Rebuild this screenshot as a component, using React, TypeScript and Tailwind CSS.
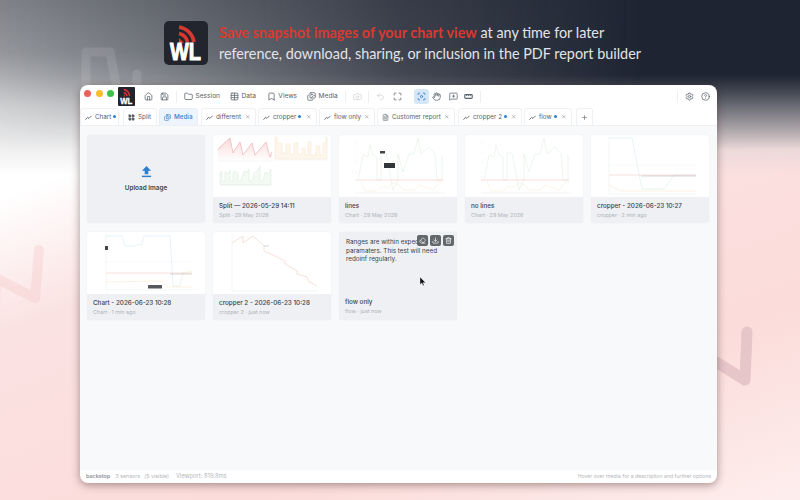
import React from 'react';
import {
  Folder, Table, Bookmark, Images, Home, Save, Undo2, Maximize, Hand, MessageSquarePlus,
  Settings, CircleHelp, LayoutGrid, X, Plus, FileText, Eraser, Download, Trash2, Camera, Focus,
} from 'lucide-react';

const FONT = 'font-["Inter","Liberation_Sans",sans-serif]';

function Logo({ size }: { size: 'lg' | 'sm' }) {
  const box = size === 'lg' ? 'w-[44px] h-[44px] rounded-[5px]' : 'w-[17px] h-[19px] rounded-[1px]';
  return (
    <div className={`${box} bg-[#22252d] shrink-0`}>
      <svg viewBox="0 0 44 44" className="w-full h-full" preserveAspectRatio="none">
        <path d="M15 6 A 18 18 0 0 1 30 21" fill="none" stroke="#d8382e" strokeWidth="3.6" />
        <path d="M15 12.5 A 11 11 0 0 1 23.5 21" fill="none" stroke="#d8382e" strokeWidth="3.6" />
        <path d="M15 17 L20 22 H15 Z" fill="#d8382e" />
        <text x="6" y="39" fontSize="23" fontWeight="700" fontFamily="Liberation Sans" fill="#fff" stroke="#fff" strokeWidth="1" textLength="31" lengthAdjust="spacingAndGlyphs">
          WL
        </text>
      </svg>
    </div>
  );
}

type ToolBtnProps = { icon: React.ElementType; label?: string; dim?: boolean; ml: string };

function ToolBtn({ icon: Icon, label, dim, ml }: ToolBtnProps) {
  return (
    <div className={`flex items-center gap-[2.5px] ${ml} ${dim ? 'text-[#d0d3d6]' : 'text-[#5a6068]'}`}>
      <Icon className="w-[9px] h-[9px]" strokeWidth={2} />
      {label && <span className="text-[6.6px] pt-[1px] whitespace-nowrap">{label}</span>}
    </div>
  );
}

function Sep({ ml }: { ml: string }) {
  return <div className={`w-px h-[12px] bg-[#eceef0] ${ml}`} />;
}

function RulerIcon({ className }: { className?: string }) {
  return (
    <svg viewBox="0 0 12 12" className={className} fill="none" stroke="currentColor" strokeWidth="1.4">
      <rect x="1" y="3.5" width="10" height="5" rx="1.2" />
      <path d="M3.5 3.5 V5.5 M6 3.5 V5.5 M8.5 3.5 V5.5" strokeWidth="1" />
    </svg>
  );
}

function LineIcon({ className }: { className?: string }) {
  return (
    <svg viewBox="0 0 8 8" className={className} fill="none" stroke="currentColor" strokeWidth="1">
      <path d="M0.5 6.5 L3 3.8 L4.5 5 L7.5 2" />
    </svg>
  );
}

function GridIcon({ className }: { className?: string }) {
  return <LayoutGrid className={className} fill="currentColor" strokeWidth={2} />;
}

type TabProps = {
  icon: React.ElementType;
  label: string;
  dot?: boolean;
  close?: boolean;
  active?: boolean;
  w: string;
};

function Tab({ icon: Icon, label, dot, close, active, w }: TabProps) {
  return (
    <div
      className={`${w} h-[17px] shrink-0 flex items-center gap-[3px] pl-[4px] pr-[5px] rounded-t-[3px] border border-b-0 text-[6.3px] ${
        active ? 'bg-[#eef4fb] border-[#e7edf3] text-[#2f7fd0] font-medium' : 'bg-white border-[#f0f1f3] text-[#5a6068]'
      }`}
    >
      <Icon className="w-[7px] h-[7px] shrink-0" />
      {label && <span className="pt-[1px] whitespace-nowrap">{label}</span>}
      {dot && <span className="w-[3px] h-[3px] -ml-[1px] -mt-[2px] rounded-full bg-[#2f7fd0] shrink-0" />}
      {close && <X className="w-[5.5px] h-[5.5px] ml-auto text-[#777] shrink-0" strokeWidth={2} />}
    </div>
  );
}

function Card({ title, sub, children }: { title: string; sub: string; children: React.ReactNode }) {
  return (
    <div className="h-[88px] rounded-[3px] overflow-hidden bg-[#eef0f3] flex flex-col shadow-[0_0_2px_rgba(0,0,0,0.05)]">
      <div className="h-[62px] bg-white shrink-0">{children}</div>
      <div className="px-[6px] pt-[4.5px]">
        <div className="text-[6.3px] leading-[9px] font-medium text-[#3d4248] whitespace-nowrap">{title}</div>
        <div className="text-[5.4px] leading-[9px] text-[#b0b4b9] whitespace-nowrap">{sub}</div>
      </div>
    </div>
  );
}

function Chart({ children }: { children: React.ReactNode }) {
  return (
    <svg viewBox="0 0 118 62" className="w-full h-full" fill="none" strokeWidth="0.45">
      {children}
    </svg>
  );
}

function SplitChart() {
  const red = 'M5 15 L7 12 L17 3 L20 18 L27 7 L30 20 L39 8 L42 20 L53 7 L57 22 L59 17';
  return (
    <Chart>
      <defs>
        <linearGradient id="redfade" x1="0" y1="0" x2="0" y2="1">
          <stop offset="0" stopColor="#fbdada" />
          <stop offset="1" stopColor="#fff" />
        </linearGradient>
      </defs>
      <path d={`${red} V26 H5 Z`} fill="url(#redfade)" />
      <path d={red} stroke="#eea5a5" strokeWidth="0.6" />
      <path d="M62 2 H64 V8 H69 V18 H73 V9 H77 V19 H81 V8 H85 V19 H89 V13 H92 V20 H95 V7 H98 V20 H103 V11 H107 V20 H110 V8 H113 V2 H114 V24 H62 Z" fill="#fdf6ec" stroke="#f9e4c8" />
      <path d="M7 38 L9 36 V46 H12 V36 L15 39 L17 35 V46 H20 V37 L23 36 L25 39 V46 H28 L31 36 L34 37 L36 34 V46 H39 L41 38 L44 36 L47 31 V46 H50 L52 37 L55 39 L58 34 V50 H7 Z" fill="#f3f9f3" stroke="#d6ead6" />
      <path d="M5 26 H60 M62 25 H115 M7 50 H58" stroke="#eceef0" />
    </Chart>
  );
}

function LinesChart({ marks }: { marks?: boolean }) {
  return (
    <Chart>
      <path d="M19 45 L24 20 L29 22 L31 10 L34 20 L38 22 V45 H42 V18 H47 L54 55 L59 45 V19 L64 37 L70 19 H75 L79 3 L82 19 L90 12 L96 19 L98 45 H103 V20" stroke="#d6ead6" />
      <path d="M16 45 H104" stroke="#f4b9b0" />
      <path d="M22 46 L26 56 H38 L42 52 H50 L54 48 L60 50 L64 55 H76 L80 50 L94 55 L100 47 H104" stroke="#f8e6cb" />
      <path d="M16 7 H18 M16 17 H18 M16 27 H18 M16 37 H18 M16 58 H106" stroke="#e5e7ea" />
      {marks && <rect x="41" y="16" width="5" height="2.5" fill="#444" />}
      {marks && <rect x="45" y="28" width="11" height="5" fill="#33363a" />}
    </Chart>
  );
}

function CropperChart() {
  return (
    <Chart>
      <path d="M18 3 H41 L51 54 H73 L83 40 H105" stroke="#c6e6ee" />
      <path d="M18 40 H105" stroke="#f4bdb4" />
      <path d="M50 41 H105" stroke="#8f8f88" strokeWidth="0.35" />
      <path d="M18 50 L30 56 H105" stroke="#f8dfbc" />
      <path d="M18 30 H105" stroke="#edf3f4" />
      <path d="M18 2 V59 H106" stroke="#e6e8eb" />
    </Chart>
  );
}

function ChartCard() {
  return (
    <Chart>
      <path d="M19 4 H35 L38 14 H46 L55 12 L57 4 H83 L86 54 H93 L96 40" stroke="#c6e6ee" />
      <path d="M19 41 H105" stroke="#f4bdb4" />
      <path d="M19 50 L76 49 L80 55 H105 M96 41 L105 39" stroke="#f8dfbc" />
      <path d="M19 30 H105" stroke="#edf3f4" />
      <path d="M83 42 H105" stroke="#8f8f88" strokeWidth="0.35" />
      <path d="M19 2 V58 H106" stroke="#e6e8eb" />
      <rect x="18" y="14" width="3" height="4" fill="#444" />
      <rect x="61" y="53" width="14" height="3.5" rx="0.5" fill="#55585c" />
    </Chart>
  );
}

function Cropper2Chart() {
  return (
    <Chart>
      <path d="M19 11 L30 4 V11 L40 4 L51 14 V19 L62 24 L72 29 V32 L84 39 V42 L94 45 L95 49 L104 54" stroke="#f2b8b0" />
      <path d="M19 2 V59 H105" stroke="#e6e8eb" />
      <path d="M51 14 H56" stroke="#888" strokeWidth="0.35" />
    </Chart>
  );
}

export default function App() {
  return (
    <div className={`${FONT} w-[800px] h-[500px] relative overflow-hidden flex flex-col bg-[linear-gradient(160deg,#ffffff_0%,#ffffff_25%,#fbe2e2_42%,#fbdcda_75%,#fdeeed_100%)]`}>
      <div className="absolute inset-x-0 top-0 h-[175px] bg-[linear-gradient(180deg,#85878c_0%,#9b9da1_30%,rgba(200,201,203,0.8)_60%,transparent_100%)]" />
      <div className="absolute inset-x-0 top-0 h-[150px] [mask-image:linear-gradient(90deg,rgba(0,0,0,0.05)_0%,rgba(0,0,0,0.75)_50%,black_80%)]">
        <div className="w-full h-full bg-[linear-gradient(180deg,#1e2432_0%,#1e2432_50%,rgba(30,36,50,0.55)_72%,transparent_100%)]" />
      </div>
      <svg className="absolute inset-0 w-[800px] h-[500px]" viewBox="0 0 800 500" fill="none" strokeLinecap="round" strokeLinejoin="round">
        <path d="M86 95 V52 H110 L118 95" stroke="#ffffff" strokeOpacity="0.1" strokeWidth="9" />
        <path d="M137 95 V74" stroke="#ffffff" strokeOpacity="0.1" strokeWidth="9" />
        <path d="M-4 278 L35 298 L39 250 M-4 278 L-6 330" stroke="#f5caca" strokeOpacity="0.4" strokeWidth="10" />
        <path d="M700 352 L745 380 L747 332" stroke="#e3c3c6" strokeOpacity="0.9" strokeWidth="11" />
      </svg>

      <div className="relative h-[85px] shrink-0 flex items-center gap-[11px] pl-[164px] pt-[1px]">
        <Logo size="lg" />
        <div className={`font-["Lato",sans-serif] text-[14.4px] leading-[21.5px] text-[#e2e4e7] whitespace-nowrap`}>
          <div>
            <span className="font-bold text-[#d93a30]">Save snapshot images of your chart view</span> at any time for later
          </div>
          <div>reference, download, sharing, or inclusion in the PDF report builder</div>
        </div>
      </div>

      <div className="relative ml-[80px] w-[637px] h-[398px] rounded-[8px] bg-white overflow-hidden flex flex-col shadow-[0_2px_8px_rgba(60,30,30,0.45)]">
        <div className="h-[23px] shrink-0 flex items-center pl-[4px]">
          <div className="flex gap-[4.5px] mr-[4px] -mt-[6px]">
            <span className="w-[7px] h-[7px] rounded-full bg-[#f0605a]" />
            <span className="w-[7px] h-[7px] rounded-full bg-[#f6bd30]" />
            <span className="w-[7px] h-[7px] rounded-full bg-[#3cc24a]" />
          </div>
          <Logo size="sm" />
          <ToolBtn icon={Home} ml="ml-[9px]" />
          <ToolBtn icon={Save} ml="ml-[7px]" />
          <Sep ml="ml-[7px]" />
          <ToolBtn icon={Folder} label="Session" ml="ml-[7px]" />
          <ToolBtn icon={Table} label="Data" ml="ml-[10px]" />
          <ToolBtn icon={Bookmark} label="Views" ml="ml-[11px]" />
          <ToolBtn icon={Images} label="Media" ml="ml-[10px]" />
          <Sep ml="ml-[7px]" />
          <ToolBtn icon={Camera} dim ml="ml-[7px]" />
          <Sep ml="ml-[6px]" />
          <ToolBtn icon={Undo2} dim ml="ml-[7px]" />
          <ToolBtn icon={Maximize} ml="ml-[8px]" />
          <div className="ml-[12px] w-[15px] h-[15px] rounded-[3px] bg-[#d5e6f6] flex items-center justify-center text-[#2f7fd0]">
            <Focus className="w-[9px] h-[9px]" strokeWidth={2.2} />
          </div>
          <ToolBtn icon={Hand} ml="ml-[3px]" />
          <ToolBtn icon={MessageSquarePlus} ml="ml-[8px]" />
          <ToolBtn icon={RulerIcon} ml="ml-[6px]" />
          <Sep ml="ml-[7px]" />
          <Sep ml="ml-auto" />
          <ToolBtn icon={Settings} ml="ml-[7px]" />
          <ToolBtn icon={CircleHelp} ml="ml-[7px] mr-[7px]" />
        </div>

        <div className="h-[18px] shrink-0 flex items-end gap-[2px] border-b border-[#eef0f2]">
          <Tab icon={LineIcon} label="Chart" dot w="w-[39px]" />
          <Tab icon={GridIcon} label="Split" w="w-[34px] ml-[2px]" />
          <Tab icon={Images} label="Media" active w="w-[39px]" />
          <Tab icon={LineIcon} label="different" close w="w-[55px] ml-[1px]" />
          <Tab icon={LineIcon} label="cropper" dot close w="w-[59px]" />
          <Tab icon={LineIcon} label="flow only" close w="w-[56px]" />
          <Tab icon={FileText} label="Customer report" close w="w-[78px]" />
          <Tab icon={LineIcon} label="cropper 2" dot close w="w-[64px] ml-[1px]" />
          <Tab icon={LineIcon} label="flow" dot close w="w-[48px]" />
          <Tab icon={Plus} label="" w="w-[17px] ml-[2px]" />
        </div>

        <div className="flex-1 bg-[#f8f9fb] px-[7px] pt-[9px]">
          <div className="grid grid-cols-[118px_118px_118px_118px_118px] gap-x-[8px] gap-y-[9px]">
            <div className="h-[88px] rounded-[3px] bg-[#eef0f3] flex flex-col items-center justify-center gap-[6px] pt-[2px] shadow-[0_0_2px_rgba(0,0,0,0.05)]">
              <svg viewBox="0 0 12 13" className="w-[11px] h-[12px]" fill="#2f7fd0">
                <path d="M6 0 L11 5 H8 V9 H4 V5 H1 Z" />
                <rect x="1" y="10.5" width="10" height="1.6" />
              </svg>
              <div className="text-[6.4px] font-semibold text-[#43484e]">Upload Image</div>
            </div>
            <Card title="Split — 2026-05-29 14:11" sub="Split · 29 May 2026"><SplitChart /></Card>
            <Card title="lines" sub="Chart · 29 May 2026"><LinesChart marks /></Card>
            <Card title="no lines" sub="Chart · 29 May 2026"><LinesChart /></Card>
            <Card title="cropper - 2026-06-23 10:27" sub="cropper · 2 min ago"><CropperChart /></Card>
            <Card title="Chart - 2026-06-23 10:28" sub="Chart · 1 min ago"><ChartCard /></Card>
            <Card title="cropper 2 - 2026-06-23 10:28" sub="cropper 2 · just now"><Cropper2Chart /></Card>
            <div className="relative h-[88px] rounded-[3px] bg-[#eef0f3] flex flex-col px-[6px] pb-[4px] pt-[6px] shadow-[0_0_2px_rgba(0,0,0,0.05)]">
              <p className="text-[6.3px] leading-[8.6px] text-[#3d4248] pl-[1px]">
                Ranges are within expected paramaters. This test will need redoinf regularly.
              </p>
              <div className="mt-auto">
                <div className="text-[6.3px] leading-[9px] font-medium text-[#3d4248]">flow only</div>
                <div className="text-[5.4px] leading-[9px] text-[#b0b4b9]">flow · just now</div>
              </div>
              <div className="absolute top-[3px] right-[3px] flex gap-[2px]">
                {[Eraser, Download, Trash2].map((Icon, i) => (
                  <div key={i} className="w-[11px] h-[11px] rounded-[2px] bg-[#65686b] flex items-center justify-center text-white">
                    <Icon className="w-[7px] h-[7px]" strokeWidth={2.2} />
                  </div>
                ))}
              </div>
              <svg viewBox="0 0 8 12" className="absolute left-[81px] top-[45px] w-[6px] h-[9px]">
                <path d="M0 0 V10 L2.5 8 L4 11.5 L5.5 11 L4 7.5 H7.5 Z" fill="#111" stroke="#fff" strokeWidth="0.5" />
              </svg>
            </div>
          </div>
        </div>

        <div className="h-[13px] shrink-0 flex items-center px-[6px] text-[5.4px] text-[#b4b7bb] whitespace-nowrap">
          <span className="font-semibold text-[#8d9197]">backstop</span>
          <span className="ml-[5px]">3 sensors</span>
          <span className="ml-[4px]">(5 visible)</span>
          <span className="ml-[7px] text-[5.8px]">Viewport: 819.8ms</span>
          <span className="ml-auto text-[5.2px]">Hover over media for a description and further options</span>
        </div>
      </div>
    </div>
  );
}
